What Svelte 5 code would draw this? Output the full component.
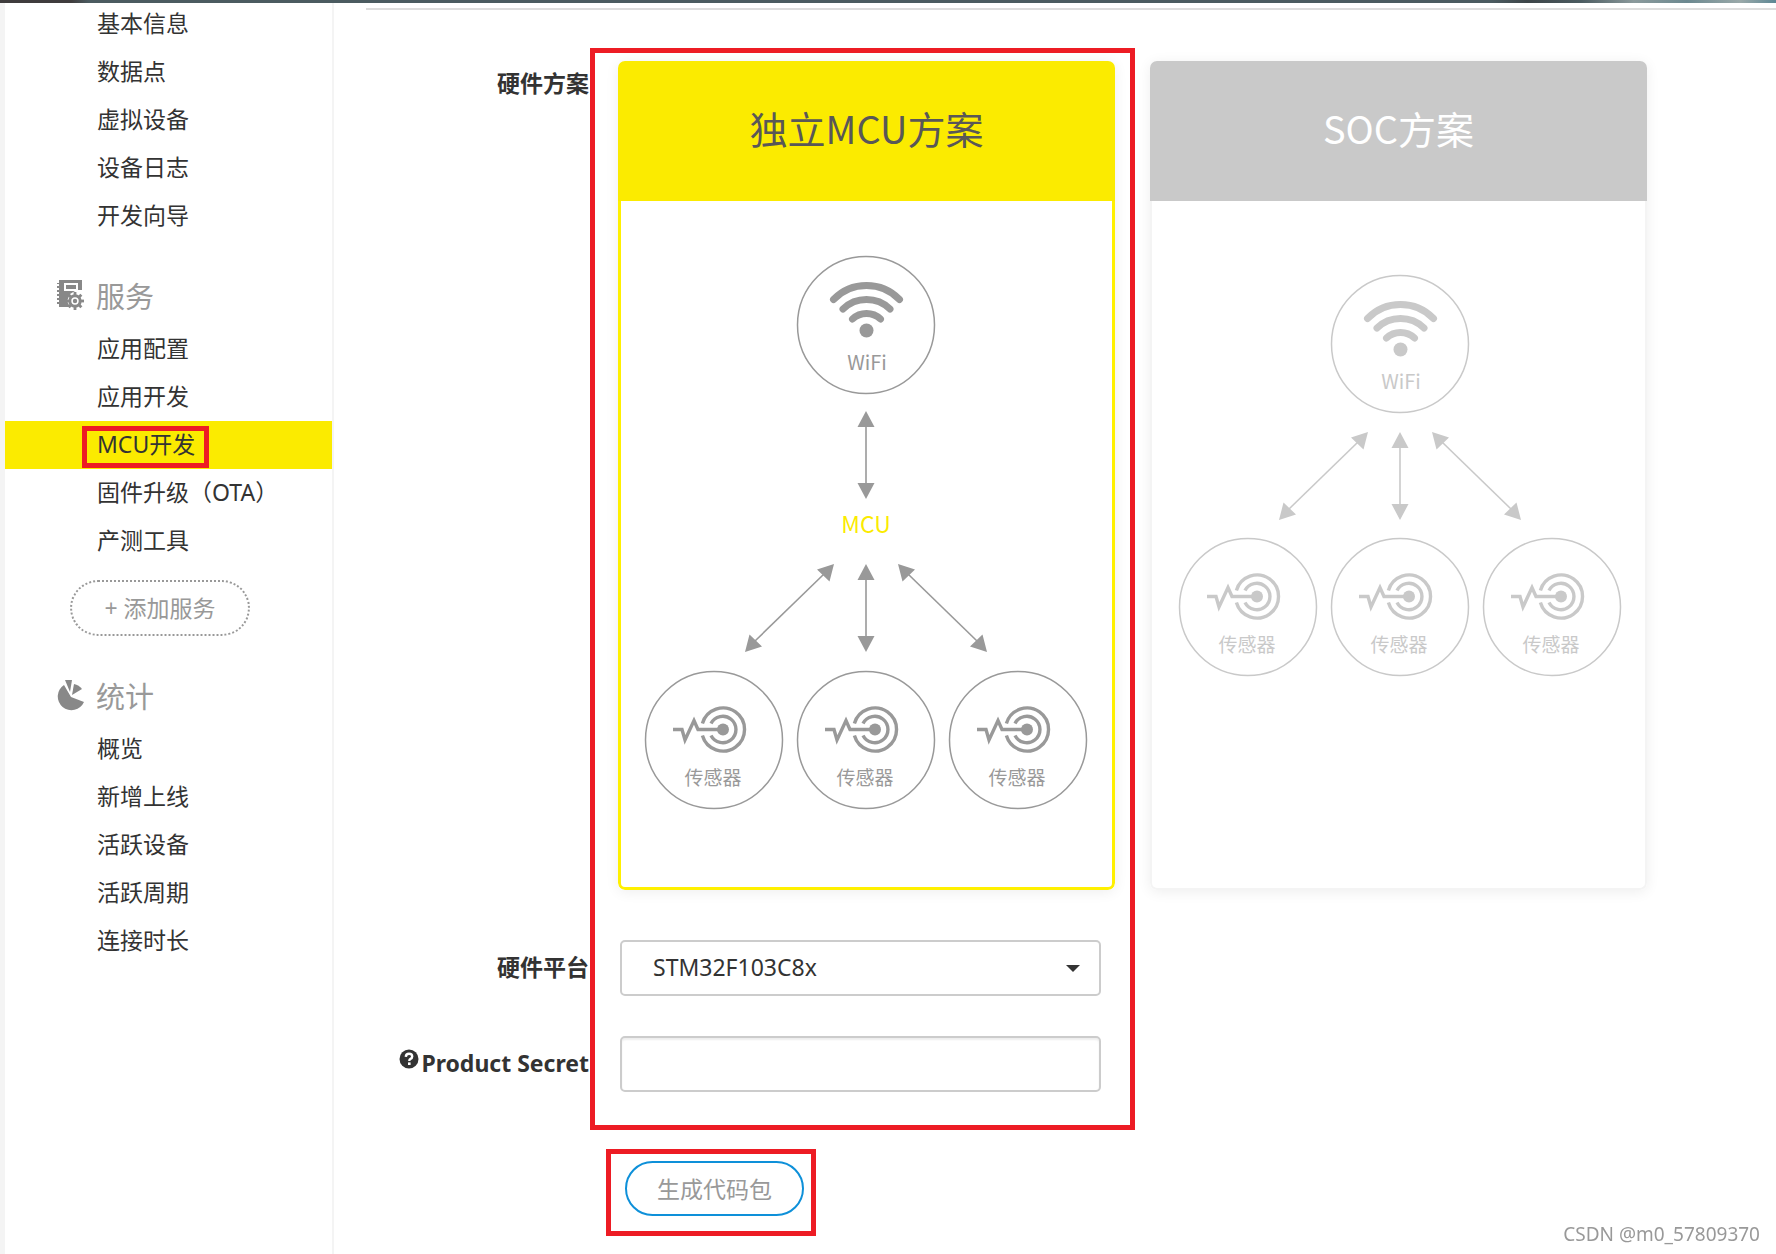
<script lang="ts">
	type Plan = 'mcu' | 'soc';

	interface MenuGroup {
		title?: string;
		icon?: 'service' | 'stats';
		items: string[];
		addLabel?: string;
	}

	const MENU: MenuGroup[] = [
		{ items: ['基本信息', '数据点', '虚拟设备', '设备日志', '开发向导'] },
		{
			title: '服务',
			icon: 'service',
			items: ['应用配置', '应用开发', 'MCU开发', '固件升级（OTA）', '产测工具'],
			addLabel: '添加服务',
		},
		{
			title: '统计',
			icon: 'stats',
			items: ['概览', '新增上线', '活跃设备', '活跃周期', '连接时长'],
		},
	];

	const SENSORS = [-152, 0, 152];
	const TEETH = [0, 45, 90, 135, 180, 225, 270, 315];

	let current = $state('MCU开发');
	let plan = $state<Plan>('mcu');
	let platform = $state('STM32F103C8x');
	let secret = $state('');
</script>

{#snippet wifi(y: number)}
	<g transform="translate(0 {y})">
		<circle class="ring" r="68.5" />
		<g class="line" stroke-width="7" stroke-linecap="round">
			<path d="M-32.5 -25.5A46 46 0 0 1 33.5 -25.5" />
			<path d="M-23 -16A34 34 0 0 1 24 -16" />
			<path d="M-13.5 -6A20.5 20.5 0 0 1 14.5 -6" />
		</g>
		<circle class="solid" cx="0.5" cy="5.5" r="7" />
		<text x="1" y="45" font-size="20">WiFi</text>
	</g>
{/snippet}

{#snippet sensor(x: number, y: number)}
	<g transform="translate({x} {y})">
		<circle class="ring" r="68.5" />
		<g class="line" stroke-width="3.4">
			<path d="M-41 -10.5H-32L-29 0L-20 -19.5L-16 -10.5H9" />
			<path d="M-11.6 -16.5A21.5 21.5 0 1 1 -11.6 -4.5" />
			<path d="M-3 -16.5A13.2 13.2 0 1 1 -3 -4.5" />
		</g>
		<circle class="solid" cx="9" cy="-10.5" r="6" />
		<text x="-1" y="45" font-size="19">传感器</text>
	</g>
{/snippet}

{#snippet vertical(y: number)}
	<g transform="translate(0 {y})">
		<path class="thin" d="M0 14V74" />
		<path class="solid" d="M0 0L8.5 16H-8.5ZM0 88L8.5 72H-8.5Z" />
	</g>
{/snippet}

{#snippet fan(y: number)}
	{@render vertical(y)}
	{#each [1, -1] as side}
		<g transform="translate(0 {y}) scale({side} 1)">
			<path class="thin" d="M42 10L111 77" />
			<path class="solid" d="M32 0L49 5.5L36.5 17.5ZM121 88L104 82.5L116.5 70.5Z" />
		</g>
	{/each}
{/snippet}

<div class="topbar"></div>

<div class="page">
	<nav class="sidebar">
		{#each MENU as group}
			{#if group.title}
				<h2 class="group-title">
					{#if group.icon === 'service'}
						<svg width="28" height="31" viewBox="0 0 28 31" fill="#888">
							<path fill-rule="evenodd" d="M2 0H25V10H21V3H7V11H18L13 14L10 21L13 27H2V24H0V22H2V20H0V18H2V16H0V14H2V12H0V10H2V8H0V6H2V4H0V3H2ZM9 5H19V9H9Z" />
							<circle cx="18" cy="21" r="5.2" fill="none" stroke="#888" stroke-width="3" />
							{#each TEETH as angle}
								<path d="M16.6 12H19.4V16H16.6Z" transform="rotate({angle} 18 21)" />
							{/each}
							<circle cx="18" cy="21" r="2.2" />
						</svg>
					{:else}
						<svg width="28" height="31" viewBox="0 0 28 31" fill="#888">
							<path d="M7 5L14 17L27 22A13.7 13.7 0 1 1 7 5Z" />
							<path d="M8 0H15L13 12Z" />
							<path d="M17 4Q22 5 25 9L15 15Z" />
						</svg>
					{/if}
					{group.title}
				</h2>
			{/if}
			<ul>
				{#each group.items as item}
					<li>
						<a href="#{item}" class:active={current === item} onclick={() => (current = item)}>
							<span class:marked={item === 'MCU开发'}>{item}</span>
						</a>
					</li>
				{/each}
			</ul>
			{#if group.addLabel}
				<button class="add-button" type="button">+ {group.addLabel}</button>
			{/if}
		{/each}
	</nav>

	<main>
		<form onsubmit={(e) => e.preventDefault()}>
			<div class="row plans-row">
				<span class="label" id="plan-label">硬件方案</span>
				<div class="plans" role="group" aria-labelledby="plan-label">
					<button class="card" class:selected={plan === 'mcu'} type="button" onclick={() => (plan = 'mcu')}>
						<span class="card-title">独立MCU方案</span>
						<span class="card-body">
							<svg width="490" height="680" viewBox="-244 0 490 680">
								{@render wifi(124)}
								{@render vertical(210)}
								<text class="accent" x="0" y="332" font-size="23">MCU</text>
								{@render fan(363)}
								{#each SENSORS as x}
									{@render sensor(x, 539)}
								{/each}
							</svg>
						</span>
					</button>
					<button class="card" class:selected={plan === 'soc'} type="button" onclick={() => (plan = 'soc')}>
						<span class="card-title">SOC方案</span>
						<span class="card-body">
							<svg width="490" height="680" viewBox="-246 0 490 680">
								{@render wifi(143)}
								{@render fan(231)}
								{#each SENSORS as x}
									{@render sensor(x, 406)}
								{/each}
							</svg>
						</span>
					</button>
				</div>
			</div>

			<div class="row">
				<label class="label" for="platform">硬件平台</label>
				<div class="field">
					<select id="platform" bind:value={platform}>
						<option>STM32F103C8x</option>
					</select>
					<svg class="caret" width="14" height="7" viewBox="0 0 14 7"><path d="M0 0H14L7 7Z" fill="#333" /></svg>
				</div>
			</div>

			<div class="row">
				<label class="label" for="secret">
					<svg class="help" width="20" height="20" viewBox="0 0 20 20">
						<circle cx="10" cy="10" r="9.5" fill="#333" />
						<path d="M6.8 7.8Q7 4.8 10 4.8Q13.2 4.8 13.2 7.4Q13.2 9 11.5 9.8Q10.3 10.4 10.3 12" fill="none" stroke="#fff" stroke-width="2.4" />
						<path d="M9 13.4H11.6V16H9Z" fill="#fff" />
					</svg>Product Secret
				</label>
				<div class="field">
					<input id="secret" type="text" bind:value={secret} />
				</div>
			</div>

			<div class="frame"></div>

			<div class="actions">
				<button class="generate" type="submit">生成代码包</button>
			</div>
		</form>
	</main>
</div>

<div class="watermark">CSDN @m0_57809370</div>

<style>
	:global(body) {
		background: #fff;
		color: #333;
		font-family: 'Noto Sans', 'Noto Sans CJK SC', sans-serif;
		font-size: 23px;
	}

	button,
	select,
	input {
		box-sizing: border-box;
		font: inherit;
		color: inherit;
		cursor: pointer;
	}

	.topbar {
		position: fixed;
		inset: 0 0 auto;
		z-index: 2;
		height: 3px;
		background: linear-gradient(90deg, #3f3c3d 4%, #4b5b60 5%, #4b5b60 84%, #3d4548 86%, #4b5b60 89%, #8b9a9c 92%, #6c8990 95%, #9aa9a9 98%, #5d8794);
	}

	.page {
		display: flex;
		min-height: 100vh;
	}

	.sidebar {
		box-sizing: border-box;
		flex: 0 0 334px;
		border-left: 5px solid #f4f4f4;
		border-right: 2px solid #f4f4f4;
	}

	ul {
		margin: 0;
		padding: 0;
		list-style: none;
	}

	.sidebar a {
		display: block;
		height: 48px;
		padding-left: 92px;
		line-height: 46px;
		color: #333;
		text-decoration: none;
	}

	.sidebar a.active {
		background: #fbeb00;
	}

	.marked {
		position: relative;
	}

	.marked::after {
		content: '';
		position: absolute;
		inset: -2px -14px -8px -15px;
		border: 5px solid #ed1c24;
	}

	.group-title {
		display: flex;
		align-items: center;
		gap: 11px;
		height: 52px;
		margin: 29px 0 0;
		padding: 0 0 4px 52px;
		font-size: 29px;
		font-weight: 400;
		color: #999;
	}

	.add-button {
		display: block;
		width: 180px;
		height: 56px;
		margin: 15px 0 33px 65px;
		padding: 0 0 2px;
		border: 2px dotted #999;
		border-radius: 28px;
		background: none;
		color: #999;
	}

	main {
		flex: 1;
		min-width: 0;
		margin: 8px 0 0 32px;
		border-top: 2px solid #ddd;
	}

	form {
		position: relative;
		display: grid;
		gap: 40px;
		padding-top: 51px;
	}

	.row {
		display: grid;
		grid-template-columns: 223px 1fr;
		column-gap: 29px;
		align-items: center;
	}

	.plans-row {
		align-items: start;
		margin-bottom: 10px;
	}

	.label {
		padding-bottom: 2px;
		line-height: 44px;
		font-weight: 700;
		text-align: right;
		white-space: nowrap;
	}

	.help {
		margin-right: 2px;
		vertical-align: 3px;
	}

	.plans {
		display: flex;
		gap: 35px;
	}

	.card {
		display: flex;
		flex-direction: column;
		width: 497px;
		min-height: 829px;
		padding: 0;
		border: 0;
		border-radius: 7px;
		background: none;
		box-shadow: 0 2px 14px rgba(0, 0, 0, 0.07);
		overflow: hidden;
		color: #c9c9c9;
		font-family: 'Noto Sans CJK SC', sans-serif;
	}

	.card-title {
		box-sizing: border-box;
		width: 100%;
		height: 140px;
		background: #c9c9c9;
		color: #fff;
		font-size: 38px;
		line-height: 134px;
	}

	.card-body {
		box-sizing: border-box;
		flex: 1;
		width: 100%;
		border: 2px solid #f4f4f4;
		border-top: 0;
		border-radius: 0 0 7px 7px;
	}

	.card.selected {
		color: #999;
	}

	.card.selected .card-title {
		background: #fbeb00;
		color: #595757;
	}

	.card.selected .card-body {
		border-color: #fff000;
		border-width: 0 3px 3px;
	}

	.card svg {
		display: block;
		margin: 0 auto;
	}

	.ring {
		fill: none;
		stroke: currentColor;
		stroke-width: 1.5;
	}

	.line {
		fill: none;
		stroke: currentColor;
	}

	.thin {
		fill: none;
		stroke: currentColor;
		stroke-width: 1.6;
	}

	.solid {
		fill: currentColor;
	}

	.card text {
		fill: currentColor;
		text-anchor: middle;
	}

	.card .accent {
		fill: #fbeb00;
	}

	.field {
		position: relative;
		width: 481px;
		margin-left: 2px;
	}

	.field select,
	.field input {
		display: block;
		width: 100%;
		height: 56px;
		padding: 0 31px 2px;
		border: 2px solid #ccc;
		border-radius: 5px;
		background: #fff;
		appearance: none;
	}

	.field input {
		box-shadow: inset 0 2px 2px rgba(0, 0, 0, 0.07);
	}

	.caret {
		position: absolute;
		top: 25px;
		right: 21px;
		pointer-events: none;
	}

	/* highlights the fields to fill in */
	.frame {
		position: absolute;
		top: 38px;
		left: 224px;
		box-sizing: border-box;
		width: 545px;
		height: 1082px;
		border: 5px solid #ed1c24;
		pointer-events: none;
	}

	.actions {
		box-sizing: border-box;
		width: 210px;
		margin: 17px 0 0 240px;
		padding: 7px 7px 15px 14px;
		border: 5px solid #ed1c24;
	}

	.generate {
		width: 179px;
		height: 55px;
		padding: 0 0 2px;
		border: 2px solid #0e90d9;
		border-radius: 28px;
		background: #fff;
		color: #999;
	}

	.watermark {
		position: fixed;
		right: 16px;
		bottom: 7px;
		font-size: 19px;
		color: #999;
		text-shadow: -1px -1px 0 #fff;
	}
</style>
